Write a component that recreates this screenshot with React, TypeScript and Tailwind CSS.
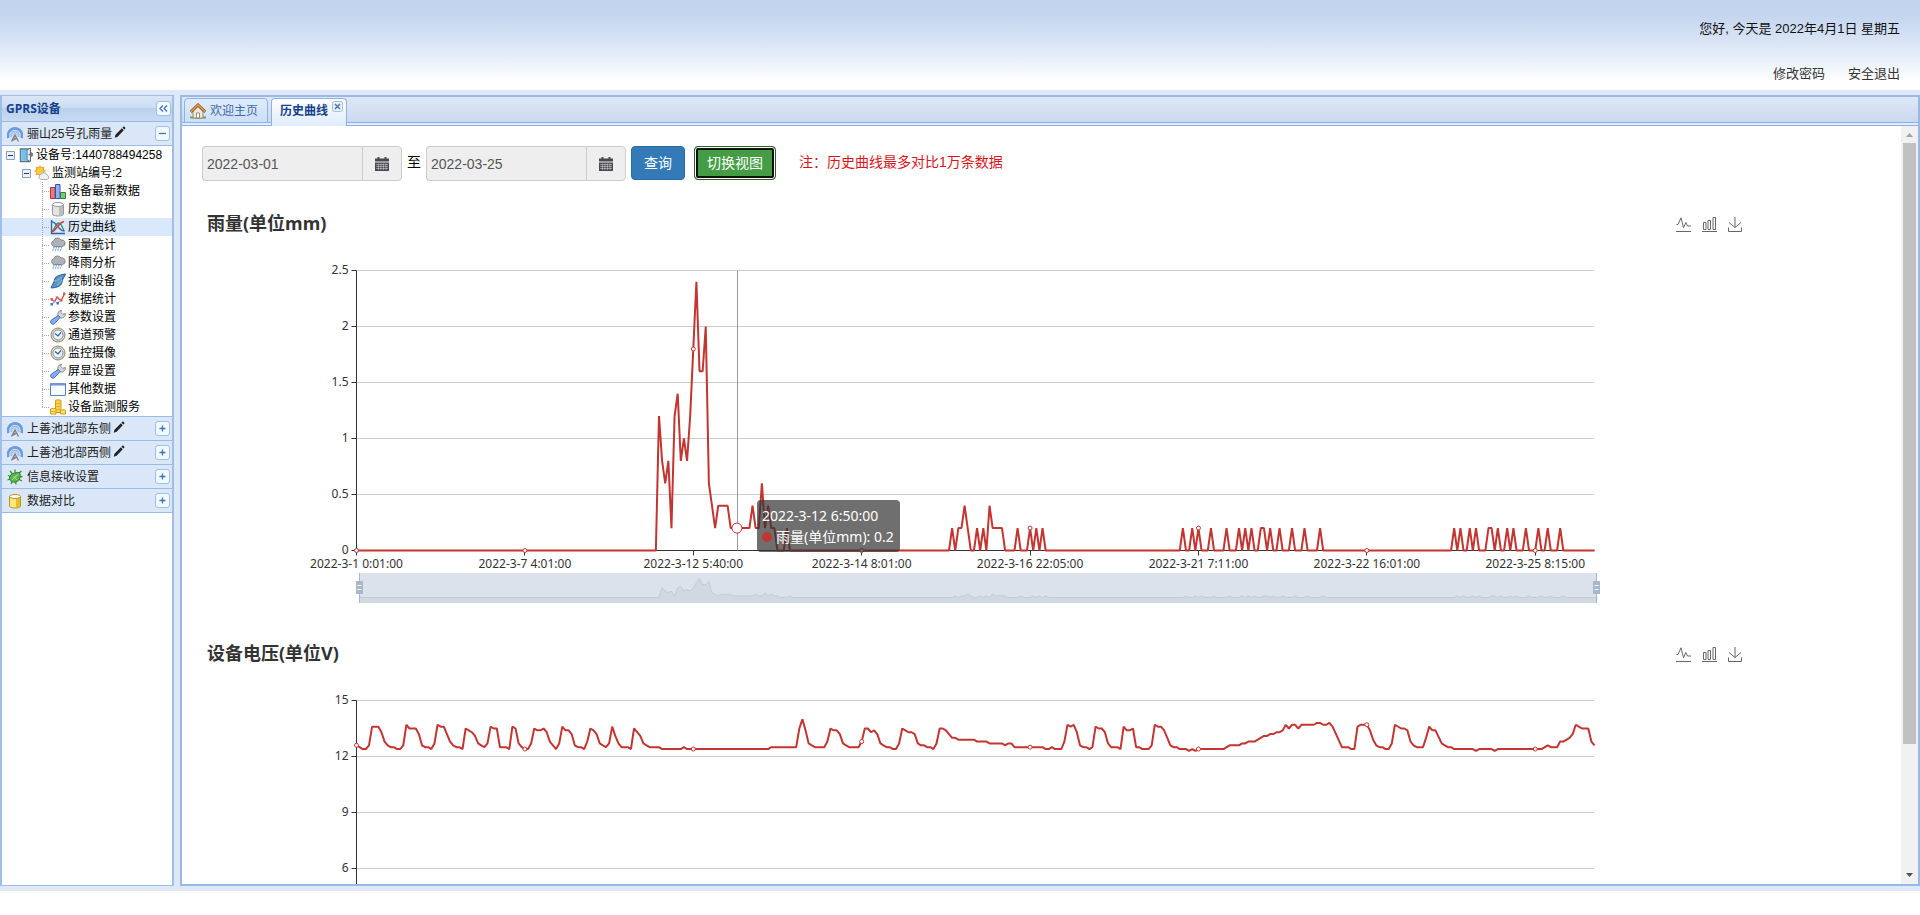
import { useState, type ReactNode } from 'react'

type Point = [number, number]

const LAST = 397
const LABEL_STEP = 54
const X_LABELS = [
  '2022-3-1 0:01:00', '2022-3-7 4:01:00', '2022-3-12 5:40:00', '2022-3-14 8:01:00',
  '2022-3-16 22:05:00', '2022-3-21 7:11:00', '2022-3-22 16:01:00', '2022-3-25 8:15:00',
]

// isolated 0.2 mm readings, everything around them is zero
const DRIZZLE: number[][] = [
  [138], [191], [199], [201], [212], [216], [218], [220],
  [265], [268], [270], [274], [279], [283], [285], [287], [290, 291], [293], [296], [300], [304], [309],
  [352], [354], [357], [359], [363, 364], [366], [369], [371], [375], [379], [382], [386],
]

const STORM: Point[] = [
  [96, 0], [97, 1.2], [98, 0.8], [99, 0.6], [100, 0.8], [101, 0.2], [102, 1.2], [103, 1.4], [104, 0.8], [105, 1],
  [106, 0.8], [107, 1.2], [108, 1.8], [109, 2.4], [110, 1.6], [111, 1.6], [112, 2], [113, 0.6], [114, 0.4], [115, 0.2],
  [116, 0.4], [119, 0.4], [120, 0.2], [126, 0.2], [127, 0.4], [128, 0.2], [129, 0.2], [130, 0.6], [131, 0.2], [132, 0.4],
  [133, 0.2], [134, 0.2], [135, 0],
  [192, 0], [193, 0.2], [194, 0.2], [195, 0.4], [196, 0.2], [197, 0],
  [202, 0], [203, 0.4], [204, 0.2], [207, 0.2], [208, 0],
]

const RAIN: Point[] = [
  [0, 0] as Point,
  ...STORM,
  ...DRIZZLE.flatMap(run => [[run[0] - 1, 0], ...run.map(i => [i, 0.2]), [run[run.length - 1] + 1, 0]] as Point[]),
  [LAST, 0] as Point,
].sort((a, b) => a[0] - b[0])

const VOLTAGE: Point[] = [
  [0, 12.6], [1, 12.5], [2, 12.4], [3, 12.4], [4, 12.6], [5, 13.6], [7, 13.6], [8, 13.3], [9, 12.8], [10, 12.6], [11, 12.5], [12, 12.5],
  [13, 12.4], [14, 12.4], [15, 12.6], [16, 13.7], [17, 13.5], [19, 13.5], [20, 13.2], [21, 12.6], [22, 12.5], [23, 12.5], [24, 12.4],
  [25, 12.7], [26, 13.7], [27, 13.6], [28, 13.6], [29, 13.2], [30, 12.8], [31, 12.6], [32, 12.5], [33, 12.5], [34, 12.4], [35, 13.5],
  [36, 13.4], [37, 13.3], [38, 13.1], [39, 12.7], [40, 12.6], [41, 12.5], [42, 12.7], [43, 13.6], [44, 13.5], [45, 13.5], [46, 12.5],
  [48, 12.5], [49, 12.4], [50, 13.6], [51, 13.5], [52, 12.7], [53, 12.5], [54, 12.4], [55, 12.4], [56, 12.7], [57, 13.5], [58, 13.4],
  [59, 13.4], [60, 13.5], [61, 13.3], [62, 12.8], [63, 12.6], [64, 12.4], [65, 12.7], [66, 13.6], [67, 13.4], [68, 13.4], [69, 13.2],
  [70, 12.6], [71, 12.5], [72, 12.5], [73, 12.4], [74, 12.8], [75, 13.5], [76, 13.4], [77, 13.2], [78, 12.7], [79, 12.6], [80, 12.5],
  [81, 12.7], [82, 13.6], [83, 13.1], [84, 12.7], [85, 12.5], [87, 12.5], [88, 12.4], [89, 13.5], [90, 13.3], [91, 13.1], [92, 12.7],
  [93, 12.6], [94, 12.5], [97, 12.5], [98, 12.4], [104, 12.4], [105, 12.5], [106, 12.4], [132, 12.4], [133, 12.5], [141, 12.5],
  [142, 13.5], [143, 14], [144, 13.4], [145, 12.7], [146, 12.6], [147, 12.5], [150, 12.5], [151, 12.8], [152, 13.5], [153, 13.4],
  [154, 13.4], [155, 13.2], [156, 12.7], [157, 12.6], [158, 12.5], [161, 12.5], [162, 12.8], [163, 13.5], [164, 13.5], [165, 13.3],
  [166, 13.4], [167, 13.2], [168, 12.7], [169, 12.6], [170, 12.5], [171, 12.5], [172, 12.4], [173, 12.4], [174, 12.7], [175, 13.5],
  [176, 13.4], [177, 13.3], [178, 13.3], [179, 13.2], [180, 12.7], [181, 12.6], [182, 12.6], [183, 12.5], [184, 12.5], [185, 12.4],
  [186, 12.7], [187, 13.5], [188, 13.5], [189, 13.4], [190, 13.2], [191, 13], [192, 13], [193, 12.9], [198, 12.9], [199, 12.8],
  [202, 12.8], [203, 12.7], [207, 12.7], [208, 12.6], [209, 12.7], [210, 12.7], [211, 12.5], [220, 12.5], [221, 12.4], [222, 12.4],
  [223, 12.5], [224, 12.4], [226, 12.4], [227, 12.8], [228, 13.7], [229, 13.6], [230, 13.7], [231, 13.3], [232, 12.6], [233, 12.5],
  [234, 12.5], [235, 12.4], [236, 12.5], [237, 13.6], [238, 13.5], [239, 13.5], [240, 13.3], [241, 12.7], [242, 12.5], [244, 12.5],
  [245, 12.4], [246, 13.6], [247, 13.4], [248, 13.4], [249, 13.5], [250, 12.5], [251, 12.5], [252, 12.4], [254, 12.4], [255, 12.6],
  [256, 13.7], [257, 13.6], [258, 13.6], [259, 13.4], [260, 13], [261, 12.6], [262, 12.5], [263, 12.5], [264, 12.4], [266, 12.4],
  [267, 12.3], [268, 12.4], [269, 12.3], [270, 12.4], [278, 12.4], [280, 12.6], [283, 12.6], [284, 12.7], [285, 12.7], [286, 12.8],
  [288, 12.8], [291, 13.1], [292, 13.1], [293, 13.2], [294, 13.2], [295, 13.3], [296, 13.3], [297, 13.4], [298, 13.7], [299, 13.5],
  [300, 13.7], [301, 13.7], [302, 13.5], [303, 13.7], [307, 13.7], [308, 13.8], [309, 13.8], [310, 13.7], [311, 13.7], [312, 13.8],
  [313, 13.6], [316, 12.5], [318, 12.5], [319, 12.4], [320, 12.4], [321, 13.6], [322, 13.7], [324, 13.7], [325, 13.4], [326, 12.9],
  [327, 12.6], [328, 12.5], [329, 12.5], [330, 12.4], [331, 12.4], [332, 12.7], [333, 13.7], [335, 13.5], [336, 13.5], [337, 13.4],
  [338, 12.8], [339, 12.6], [340, 12.5], [342, 12.5], [343, 13], [344, 13.6], [345, 13.4], [346, 13.4], [348, 12.7], [349, 12.6],
  [350, 12.5], [351, 12.5], [352, 12.4], [358, 12.4], [359, 12.3], [360, 12.4], [364, 12.4], [365, 12.3], [366, 12.4], [380, 12.4],
  [382, 12.6], [383, 12.5], [385, 12.5], [386, 12.8], [387, 12.8], [389, 13], [390, 13.2], [391, 13.7], [392, 13.6], [393, 13.5],
  [395, 13.5], [396, 12.8], [397, 12.6],
]

/* ---------- icons ---------- */

function Icon({ children, className = 'size-4' }: { children: ReactNode; className?: string }) {
  return <svg viewBox="0 0 16 16" className={`${className} shrink-0`} fill="none" aria-hidden="true">{children}</svg>
}

const AntennaIcon = () => (
  <Icon>
    <path d="M1.5 12a7 7 0 1 1 13 0" stroke="#6c9be0" strokeWidth="2.6" />
    <path d="M4.600 11a3.800 3.800 0 1 1 6.800 0" stroke="#9dc0ee" strokeWidth="2" />
    <circle cx="8" cy="8.400" r="1.700" fill="#b9bec6" />
    <path d="M8 9l-3.500 6.500M8 9l3.500 6.500M6.300 12.400h3.400M5.400 14.300l4.200-2" stroke="#85858b" strokeWidth="1.500" />
  </Icon>
)
const DeviceIcon = () => (
  <Icon>
    <path d="M2.500 2h9v12.500h-9z" fill="#cfeaf9" stroke="#56788f" strokeWidth="1.400" />
    <path d="M3.500 3h5v10.500h-5z" fill="#6fc0ee" />
    <path d="M9 3l3.500-2v13.500L9 13z" fill="#e6ebf0" stroke="#5c6b7c" />
    <path d="M10.500 7.500h4.500m0 0l-2-2m2 2l-2 2" stroke="#6b7683" strokeWidth="1.300" />
  </Icon>
)
const WeatherIcon = () => (
  <Icon>
    <path d="M6 .5v11M.5 6h11M2.100 2.100l7.800 7.800M9.900 2.100L2.100 9.900" stroke="#f2b233" strokeWidth="1.500" />
    <circle cx="6" cy="6" r="4" fill="#fccb4a" stroke="#eda325" />
    <path d="M6.800 14.500a2.700 2.700 0 0 1 .2-5.200 3.300 3.300 0 0 1 6 .7 2.400 2.400 0 0 1 .3 4.500z" fill="#eceff3" stroke="#a9b0b9" />
  </Icon>
)
const BarsIcon = () => (
  <Icon>
    <path d="M.5 4.500h4.500v11H.5z" fill="#ee7a7a" stroke="#b83232" />
    <path d="M5.500 1.500h4.500v14H5.500z" fill="#8db2f7" stroke="#2b56b8" />
    <path d="M10.500 9.500h5v6h-5z" fill="#7ac67c" stroke="#35833a" />
  </Icon>
)
const DatabaseIcon = ({ fill = '#e4e4e4', side = '#bdbdbd', stroke = '#9a9a9a' }) => (
  <Icon>
    <path d="M2.500 3.500v9.500c0 1.300 2.500 2 5.500 2s5.500-.7 5.500-2V3.500z" fill={fill} stroke={stroke} />
    <path d="M9 5.500v9c2-.1 4-.7 4-1.600V4.300c-.8.8-2.300 1.100-4 1.200z" fill={side} />
    <ellipse cx="8" cy="3.500" rx="5.500" ry="2" fill="#fafafa" stroke={stroke} />
  </Icon>
)
const CurveIcon = () => (
  <Icon>
    <path d="M1.500 1v13.500H15" stroke="#3d5f9e" strokeWidth="1.300" />
    <path d="M2 12C5 11 5.500 4 8.500 4s3.500 4 5.500 8" stroke="#3a9e4d" strokeWidth="1.400" />
    <path d="M2 3c3 0 5 3.500 7 6s3.500 3 5.500 3" stroke="#3767c6" strokeWidth="1.400" />
    <path d="M2 13c3-1 4-4 6-6s3-4 6-4.500" stroke="#d33f3f" strokeWidth="1.600" />
  </Icon>
)
const RainIcon = () => (
  <Icon>
    <path d="M4 9.500a3 3 0 0 1-.3-5.800A4 4 0 0 1 11 3a3.300 3.300 0 0 1 1.500 6.500z" fill="#aeb1b6" stroke="#84888e" />
    <path d="M4 10l-1.500 4.500M6.500 10L5 14.500M9 10l-1.500 4.500M11.500 10L10 14.500" stroke="#7ba6df" strokeWidth="1.400" strokeDasharray="1.500 .8" />
  </Icon>
)
const PlugIcon = () => (
  <Icon>
    <path d="M15.500 1c-2 .5-3 0-5 1C7 3 5 4 4.500 7c-.2 2-2.500 5-3.500 8 3-.5 4 0 6-1 3-1 4.500-2 5-5 .3-3 2.500-5 3.500-8z" fill="#5a90d2" stroke="#2f5d96" />
    <path d="M4.500 8c2.500 0 5-1.500 7-4M7 12c2-1 3.500-2.500 5-5" stroke="#a6c8f0" />
    <path d="M6.500 7.500l3 2" stroke="#59b568" strokeWidth="1.800" />
  </Icon>
)
const TrendIcon = () => (
  <Icon>
    <path d="M1.500 8.500l3 2L7 6.500l4 3L14.500 3" stroke="#d94545" strokeWidth="1.400" />
    <path d="M1.500 13.500L5 10.500l3 1.500 3.500-4.500" stroke="#9bb7e0" strokeWidth="1.200" />
    <path d="M.5 7h2.500v2.500H.5zM10 8h2.500v2.500H10zM13 1.500h2.500V4H13zM5.800 5.500h2.500V8H5.800z" fill="#e25b5b" />
    <path d="M.5 12h2.500v2.500H.5zM6.500 11H9v2.500H6.500z" fill="#4a77c4" />
  </Icon>
)
const WrenchIcon = () => (
  <Icon>
    <path d="M8 7c-.8-2.500.5-5.200 3.300-6L10.800 3.600l1.800 1.600L15.500 4.600c0 2.900-2.200 4.700-5 4.400z" fill="#d5d8dc" stroke="#888d94" />
    <path d="M8.300 6.500l1.900 1.900-5.500 6a2.300 2.300 0 0 1-3.500-3.200z" fill="#86adf0" stroke="#4670bb" />
  </Icon>
)
const ClockIcon = () => (
  <Icon>
    <circle cx="8" cy="8" r="7" fill="#e8d9b8" stroke="#8d8470" />
    <circle cx="8" cy="8" r="5" fill="#eef5fd" stroke="#7c97b8" />
    <path d="M5 6.500L8 9l3-3.500" stroke="#3c5f8d" strokeWidth="1.200" />
  </Icon>
)
const WindowIcon = () => (
  <Icon>
    <path d="M.5 2.500h15v12H.5z" fill="#f6faff" stroke="#5b83c4" />
    <path d="M1 2h14v2.500H1z" fill="#6f97d6" />
  </Icon>
)
const CoinsIcon = () => (
  <Icon>
    <path d="M5.500 1.500v12H11v-12c-1-.9-4.500-.9-5.500 0z" fill="#fbd243" stroke="#d09c1c" />
    <path d="M.5 10v5H6v-5c-1-.9-4.500-.9-5.500 0zM10.500 11.500V15h5v-3.500c-1-.9-4-.9-5 0z" fill="#fde06a" stroke="#d09c1c" />
    <path d="M6 4.500h4.500M6 7.500h4.500M6 10.500h4.500M1 12.500h5" stroke="#e3b233" />
  </Icon>
)
const BugIcon = () => (
  <Icon>
    <path d="M3 2l2.500 3M8 .5V4M1 6.500l3 1M.5 11l3.500-1.500M4 15l1.500-3M9 15.500L8.500 12M15 12l-3-1.500M15.500 7.500l-3 .5M14.500 2L11 5" stroke="#3f8f36" strokeWidth="1.300" />
    <path d="M12.500 3.500c1.500 3.500.5 7.500-2.500 9s-7 .5-7.500-3S6 3.500 12.500 3.500z" fill="#5cb34c" stroke="#2f7d2a" />
    <path d="M5 11l6.500-6M6.500 7l3.500 4" stroke="#a7df9a" />
  </Icon>
)
const HomeIcon = () => (
  <Icon>
    <path d="M0 13.500h16v2H0z" fill="#67a852" />
    <path d="M3 8l5-4.500L13 8v7H3z" fill="#f1e7d4" stroke="#8c7a5c" strokeWidth=".8" />
    <path d="M6.500 10h3v5h-3z" fill="#fff" stroke="#777" strokeWidth=".8" />
    <path d="M.8 8.800L8 2l7.200 6.800" stroke="#8f5a22" strokeWidth="3" />
    <path d="M.8 8.800L8 2l7.200 6.800" stroke="#e0a15a" strokeWidth="1.400" />
  </Icon>
)
const PencilIcon = () => (
  <Icon className="size-3">
    <path d="M1 15.500l1-4L10.500 3 13 5.500 4.800 14.200zM11.300 2.200l1.500-1.500c.8-.6 3 1.600 2.400 2.500L13.800 4.700z" fill="#222" />
  </Icon>
)
const CalendarIcon = () => (
  <svg viewBox="0 0 14 14" className="size-3.5" aria-hidden="true">
    <path d="M0 1.500h2.500V0h2v1.500h5V0h2v1.500H14V4.500H0zM0 5.500h14V14H0z" fill="#4a4a4e" />
    <path d="M1 7.500h12M1 9.500h12M1 11.500h12M3.500 6.500v6.500M6 6.500v6.500M8.500 6.500v6.500M11 6.500v6.500" stroke="#ddd" strokeWidth=".5" />
  </svg>
)

/* ---------- sidebar ---------- */

const MENU = [
  { label: '设备最新数据', icon: <BarsIcon /> },
  { label: '历史数据', icon: <DatabaseIcon /> },
  { label: '历史曲线', icon: <CurveIcon /> },
  { label: '雨量统计', icon: <RainIcon /> },
  { label: '降雨分析', icon: <RainIcon /> },
  { label: '控制设备', icon: <PlugIcon /> },
  { label: '数据统计', icon: <TrendIcon /> },
  { label: '参数设置', icon: <WrenchIcon /> },
  { label: '通道预警', icon: <ClockIcon /> },
  { label: '监控摄像', icon: <ClockIcon /> },
  { label: '屏显设置', icon: <WrenchIcon /> },
  { label: '其他数据', icon: <WindowIcon /> },
  { label: '设备监测服务', icon: <CoinsIcon /> },
]

const GROUPS = [
  { label: '上善池北部东侧', icon: <AntennaIcon />, editable: true },
  { label: '上善池北部西侧', icon: <AntennaIcon />, editable: true },
  { label: '信息接收设置', icon: <BugIcon />, editable: false },
  { label: '数据对比', icon: <DatabaseIcon fill="#fbe77a" side="#e3bf2c" stroke="#b8951c" />, editable: false },
]

function ToolButton({ label, d }: { label: string; d: string }) {
  return (
    <button aria-label={label} className="flex size-[15px] shrink-0 items-center justify-center rounded-[3px] border border-[#9ebfe8] bg-[#f2f8ff]">
      <svg viewBox="0 0 9 9" className="size-[9px]" fill="none" stroke="#4174b4" strokeWidth="1.300" aria-hidden="true"><path d={d} /></svg>
    </button>
  )
}

function GroupHeader({ label, icon, editable, open = false }: { label: string; icon: ReactNode; editable: boolean; open?: boolean }) {
  return (
    <div className="flex h-6 items-center border-b border-[#99bbe8] bg-[#d9e7f8] pr-0.5 pl-[5px]">
      {icon}
      <span className="ml-1 text-xs text-[#222]">{label}</span>
      {editable && <span className="mb-1 ml-0.5"><PencilIcon /></span>}
      <span className="ml-auto flex">
        {open ? <ToolButton label="收起" d="M1 4.500h7" /> : <ToolButton label="展开" d="M1.500 4.500h6M4.500 1.500v6" />}
      </span>
    </div>
  )
}

const Toggle = () => (
  <button aria-label="折叠节点" className="flex size-4 shrink-0 items-center justify-center">
    <svg viewBox="0 0 9 9" className="size-[9px]" aria-hidden="true">
      <path d="M.5.5h8v8h-8z" fill="#e9f0f8" stroke="#8aa0bd" />
      <path d="M2 4.500h5" stroke="#1d3b6b" />
    </svg>
  </button>
)

function Sidebar() {
  const [active, setActive] = useState('历史曲线')
  return (
    <aside className="flex w-[174px] shrink-0 flex-col border-x-2 border-t border-b border-[#a0bfe8] bg-white">
      <div className="flex h-[26px] items-center justify-between border-b border-[#99bbe8] bg-[linear-gradient(#dae6f6,#cddef4_45%,#b9d0ee_50%,#c9dbf3)] pr-px pl-1">
        <h2 className="font-['Open_Sans','Noto_Sans_CJK_SC',sans-serif] text-xs font-bold text-[#15428b]">GPRS设备</h2>
        <ToolButton label="收起面板" d="M4 1.500l-3 3 3 3M8 1.500l-3 3 3 3" />
      </div>
      <GroupHeader label="骊山25号孔雨量" icon={<AntennaIcon />} editable open />
      <ul className="text-xs text-black">
        <li className="flex h-[18px] items-center whitespace-nowrap"><Toggle /><DeviceIcon /><span className="ml-0.5">设备号:1440788494258</span></li>
        <li className="flex h-[18px] items-center pl-4"><Toggle /><WeatherIcon /><span className="ml-0.5">监测站编号:2</span></li>
        {MENU.map(item => (
          <li key={item.label} className={item.label === active ? 'bg-[#d9e8fb]' : ''}>
            <button onClick={() => setActive(item.label)} className="flex h-[18px] w-full items-center pl-8">
              <svg viewBox="0 0 16 18" className="h-[18px] w-4 shrink-0" stroke="#a8a8a8" strokeDasharray="1 1" aria-hidden="true">
                <path d={item === MENU[MENU.length - 1] ? 'M8.500 0v9M8 9.500h8' : 'M8.500 0v18M8 9.500h8'} />
              </svg>
              {item.icon}
              <span className="ml-0.5">{item.label}</span>
            </button>
          </li>
        ))}
      </ul>
      <div className="border-t border-[#99bbe8]">
        {GROUPS.map(g => <GroupHeader key={g.label} {...g} />)}
      </div>
    </aside>
  )
}

/* ---------- charts ---------- */

const LEFT = 154.5
const WIDTH = 1238
const TOP = 60.5
const HEIGHT = 280

const xOf = (i: number) => LEFT + (i * WIDTH) / LAST

function valueAt(data: Point[], i: number) {
  const next = data.findIndex(p => p[0] >= i)
  const [x1, y1] = data[next]
  if (x1 === i) return y1
  const [x0, y0] = data[next - 1]
  return y0 + ((y1 - y0) * (i - x0)) / (x1 - x0)
}

function Toolbox() {
  const box = 'size-[15px]'
  return (
    <div className="flex gap-[11px]">
      <button aria-label="切换为折线图">
        <svg viewBox="0 0 15 15" className={box} fill="none" stroke="#666" aria-hidden="true"><path d="M.5 7.500H2L5 .8l2.500 10L9.800 5.500 11.500 9H15M0 14.500h15" /></svg>
      </button>
      <button aria-label="切换为柱状图">
        <svg viewBox="0 0 15 15" className={box} fill="none" stroke="#666" aria-hidden="true"><path d="M1.500 5.500H4v7H1.500zM6 3.500h2.500v9H6zM11 .5h2.500v12H11zM0 14.500h15" /></svg>
      </button>
      <button aria-label="保存为图片">
        <svg viewBox="0 0 15 15" className={box} fill="none" stroke="#666" aria-hidden="true"><path d="M7 0v10.500M1 5.500l6 5 6-5M.5 10.500v4h13v-4" /></svg>
      </button>
    </div>
  )
}

function DataZoom({ data }: { data: Point[] }) {
  const pts = data.map(([i, v]) => `${xOf(i) + 3},${387.5 - v * 8}`).join(' ')
  return (
    <g>
      <rect x="157" y="363" width="1238" height="30" fill="#dbe2ec" />
      <polygon points={`157,393 ${pts} 1395,393`} fill="#d0d8e1" />
      <polyline points={pts} fill="none" stroke="#c3ccd6" />
      {[157.5, 1394.5].map(x => (
        <g key={x}>
          <path d={`M${x} 363v30`} stroke="#a7b7cc" />
          <rect x={x - 3.5} y="371" width="7" height="13" fill="#a7b7cc" />
          <path d={`M${x - 2} 375.500h4M${x - 2} 379.500h4`} stroke="#fff" />
        </g>
      ))}
    </g>
  )
}

interface ChartProps {
  title: string
  data: Point[]
  max: number
  ticks: number[]
  xLabels?: string[]
  hover?: number
  zoom?: boolean
  tooltip?: ReactNode
}

function Chart({ title, data, max, ticks, xLabels = [], hover, zoom = false, tooltip }: ChartProps) {
  const yOf = (v: number) => TOP + ((max - v) * HEIGHT) / max
  return (
    <section className="relative h-[400px] shrink-0 font-['Noto_Sans','Noto_Sans_CJK_SC',sans-serif]">
      <div className="absolute inset-x-0 top-0 flex items-start justify-between pr-1.5 pl-[5px]">
        <h3 className="text-lg leading-[26px] font-bold text-[#333]">{title}</h3>
        <div className="pt-[7px]"><Toolbox /></div>
      </div>
      <svg viewBox="0 0 1547 400" preserveAspectRatio="xMinYMin meet" className="h-full w-full text-xs" role="img" aria-label={title}>
        {ticks.map(t => (
          <g key={t}>
            <path d={`M${LEFT} ${yOf(t)}h${WIDTH}`} stroke="#ccc" />
            <path d={`M${LEFT - 5} ${yOf(t)}h5`} stroke="#333" />
            <text x={LEFT - 8} y={yOf(t) + 3} textAnchor="end" fill="#333">{t}</text>
          </g>
        ))}
        <path d={`M${LEFT} ${TOP}v${HEIGHT}h${WIDTH}`} fill="none" stroke="#333" />
        {xLabels.map((label, k) => (
          <g key={label}>
            <path d={`M${Math.floor(xOf(k * LABEL_STEP)) + 0.5} ${TOP + HEIGHT}v5`} stroke="#333" />
            <text x={xOf(k * LABEL_STEP)} y={TOP + HEIGHT + 17} textAnchor="middle" fill="#333">{label}</text>
          </g>
        ))}
        {hover !== undefined && <path d={`M535.500 ${TOP}v${HEIGHT}`} stroke="#999" />}
        <polyline points={data.map(([i, v]) => `${xOf(i)},${yOf(v)}`).join(' ')} fill="none" stroke="#c23531" strokeWidth="2" strokeLinejoin="bevel" />
        {X_LABELS.map((label, k) => (
          <circle key={label} cx={xOf(k * LABEL_STEP)} cy={yOf(valueAt(data, k * LABEL_STEP))} r="2" fill="#fff" stroke="#c23531" />
        ))}
        {hover !== undefined && <circle cx={xOf(hover)} cy={yOf(valueAt(data, hover))} r="5" fill="#fff" stroke="#c23531" />}
        {zoom && <DataZoom data={data} />}
      </svg>
      {tooltip}
    </section>
  )
}

const RainTooltip = () => (
  <div className="absolute top-[290px] left-[555px] w-[143px] rounded bg-[rgba(50,50,50,0.7)] p-[5px] text-sm leading-[21px] whitespace-nowrap text-white">
    <p>2022-3-12 6:50:00</p>
    <p className="flex items-center gap-1"><span className="size-2.5 rounded-full bg-[#c23531]" />雨量(单位mm): 0.2</p>
  </div>
)

/* ---------- main panel ---------- */

function DateField({ label, value }: { label: string; value: string }) {
  return (
    <div className="flex h-[35px] w-[200px]">
      <input aria-label={label} readOnly value={value} className="w-40 rounded-l border border-r-0 border-[#ccc] bg-[#eee] px-1 text-sm text-[#555] outline-none" />
      <button type="button" aria-label={`选择${label}`} className="flex w-10 items-center justify-center rounded-r border border-[#ccc] bg-[#eee]"><CalendarIcon /></button>
    </div>
  )
}

function Tabs() {
  return (
    <div className="border-b border-[#8db2e3] bg-[#deecfd]">
      <div className="flex h-[26px] items-start gap-[3px] bg-[linear-gradient(#dee8f6,#cad9ef)] pt-px pl-0.5 shadow-[inset_0_-1px_0_#8db2e3]">
        <button className="flex h-[25px] items-center gap-1 rounded-t-[4px] border border-[#8db2e3] bg-[linear-gradient(#e0ecfb,#cbdff8)] pr-[9px] pl-[5px] text-xs text-[#416aa3]">
          <HomeIcon />欢迎主页
        </button>
        <button className="flex h-7 items-start rounded-t-[4px] border border-b-0 border-[#8db2e3] bg-[linear-gradient(#fff,#deecfd)] pr-[3px] pl-2 text-xs font-bold text-[#15428b]">
          <span className="pt-1">历史曲线</span>
          <svg viewBox="0 0 11 11" className="mt-0.5 ml-1 size-[11px]" fill="none" aria-hidden="true">
            <rect x=".5" y=".5" width="10" height="10" rx="2" fill="#e6f0fb" stroke="#a3bfe4" />
            <path d="M3 3l5 5M8 3L3 8" stroke="#5578a8" strokeWidth="1.600" />
          </svg>
        </button>
      </div>
      <div className="h-0.5" />
    </div>
  )
}

function ScrollBar() {
  return (
    <div className="flex w-[17px] shrink-0 flex-col items-center bg-[#f1f1f1]" aria-hidden="true">
      <svg viewBox="0 0 17 17" className="size-[17px] shrink-0"><path d="M5 11l3.500-4 3.500 4z" fill="#a3a3a3" /></svg>
      <div className="min-h-0 w-full flex-1 px-0.5"><div className="h-[83%] bg-[#c1c1c1]" /></div>
      <svg viewBox="0 0 17 17" className="size-[17px] shrink-0"><path d="M5 6l3.500 4L12 6z" fill="#505050" /></svg>
    </div>
  )
}

export default function App() {
  return (
    <div className="flex h-screen flex-col bg-white font-['Liberation_Sans','Noto_Sans_CJK_SC',sans-serif]">
      <header className="flex h-[90px] shrink-0 flex-col items-end justify-between bg-[linear-gradient(#c2d4ee_15%,#e3ecf9_60%,#fff_90%)] pt-[19px] pr-5 pb-1.5 text-[13px] leading-5">
        <p className="text-[#111]">您好, 今天是 2022年4月1日 星期五</p>
        <nav className="flex gap-[23px] text-[#333]">
          <a href="#password">修改密码</a>
          <a href="#logout">安全退出</a>
        </nav>
      </header>

      <div className="flex min-h-0 flex-1 gap-1.5 bg-[#dfe8f6] py-[5px]">
        <Sidebar />
        <main className="flex min-w-0 flex-1 flex-col border-2 border-[#99b8e5] bg-white">
          <Tabs />
          <div className="flex min-h-0 flex-1">
            <div className="flex min-w-0 flex-1 flex-col overflow-hidden pt-5 pl-5">
              <form className="flex shrink-0 gap-[5px] text-sm whitespace-nowrap" onSubmit={e => e.preventDefault()}>
                <DateField label="开始日期" value="2022-03-01" />
                <span className="pt-1.5 text-black">至</span>
                <DateField label="结束日期" value="2022-03-25" />
                <button type="submit" className="h-[34px] w-[54px] rounded border border-[#2e6da4] bg-[#337ab7] text-white">查询</button>
                <button type="button" className="ml-1 h-[34px] w-[82px] rounded border border-[#2b602b] bg-[#449d44] text-white shadow-[inset_0_0_0_1px_#fff,inset_0_0_0_3px_#101010]">切换视图</button>
                <p className="ml-[18px] pt-1.5 text-[#d9151b]">注：历史曲线最多对比1万条数据</p>
              </form>
              <div className="mt-[29px] mr-[152px] flex flex-col gap-[30px]">
                <Chart
                  title="雨量(单位mm)" data={RAIN} max={2.5} ticks={[2.5, 2, 1.5, 1, 0.5, 0]}
                  xLabels={X_LABELS} hover={122} zoom tooltip={<RainTooltip />}
                />
                <Chart title="设备电压(单位V)" data={VOLTAGE} max={15} ticks={[15, 12, 9, 6]} />
              </div>
            </div>
            <ScrollBar />
          </div>
        </main>
      </div>
      <footer className="h-6 shrink-0" />
    </div>
  )
}
